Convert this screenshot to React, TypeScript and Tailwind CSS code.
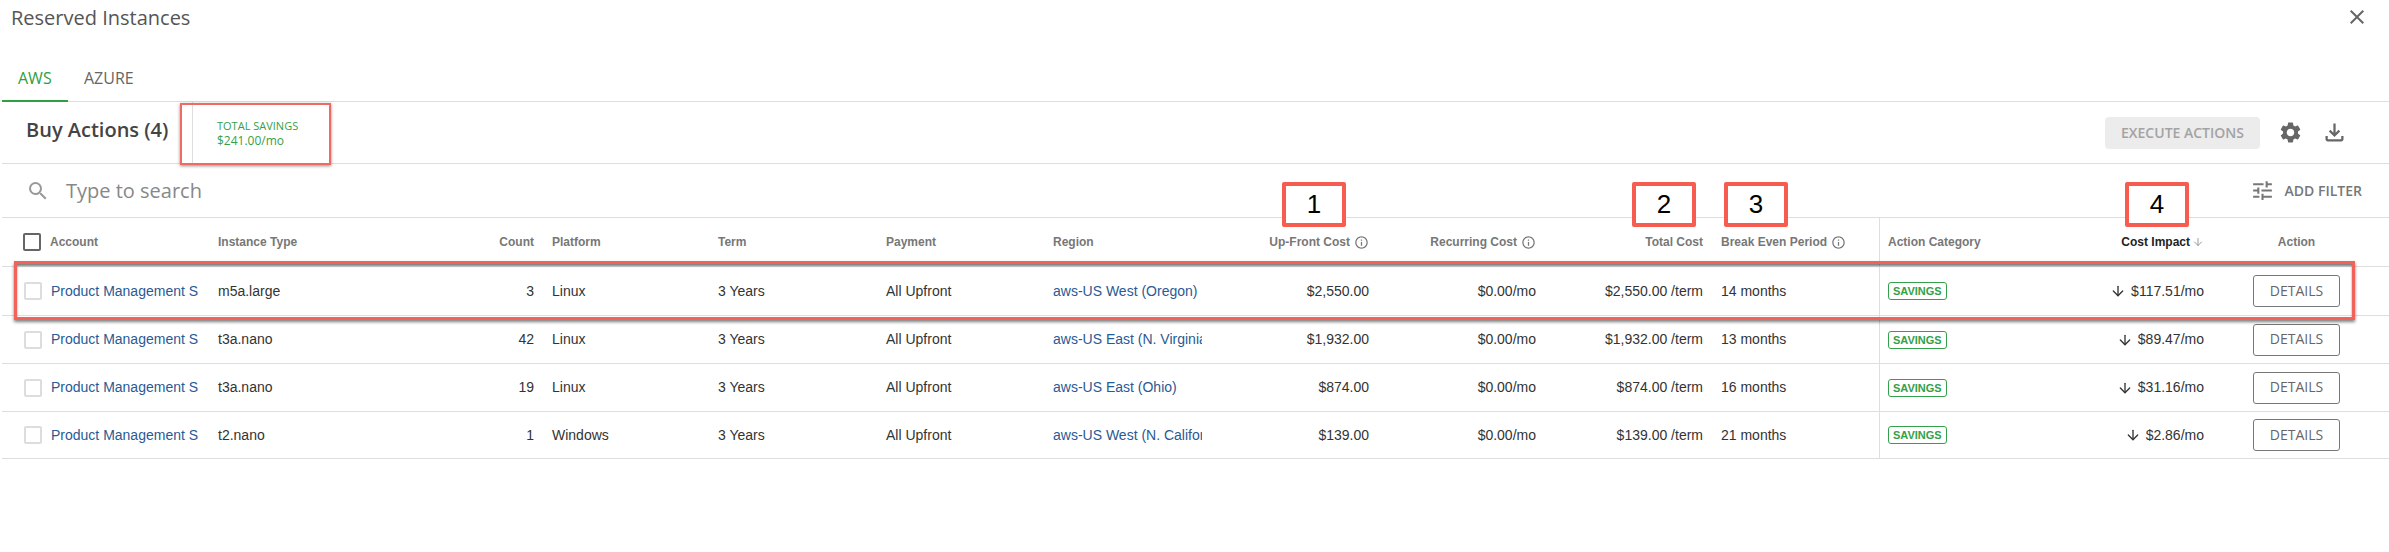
import { ArrowDown } from "lucide-react";
import { MdClose, MdInfoOutline, MdOutlineFileDownload, MdSearch, MdSettings, MdTune } from "react-icons/md";

const gridCols =
  "grid grid-cols-[177px_150px_148px_148px_150px_149px_149px_149px_149px_149px_140px_150px_157px_149px] gap-x-[18px] pl-[21px]";

const rows = [
  { count: 3, type: "m5a.large", platform: "Linux", region: "aws-US West (Oregon)", upfront: "$2,550.00", total: "$2,550.00 /term", breakEven: "14 months", impact: "$117.51/mo", height: "h-[49px]" },
  { count: 42, type: "t3a.nano", platform: "Linux", region: "aws-US East (N. Virginia)", upfront: "$1,932.00", total: "$1,932.00 /term", breakEven: "13 months", impact: "$89.47/mo", height: "h-[48px]" },
  { count: 19, type: "t3a.nano", platform: "Linux", region: "aws-US East (Ohio)", upfront: "$874.00", total: "$874.00 /term", breakEven: "16 months", impact: "$31.16/mo", height: "h-[48px]" },
  { count: 1, type: "t2.nano", platform: "Windows", region: "aws-US West (N. California)", upfront: "$139.00", total: "$139.00 /term", breakEven: "21 months", impact: "$2.86/mo", height: "h-[47px]" },
];

const Callout = ({ n, className }: { n: number; className: string }) => (
  <div className={`absolute top-[182px] h-[45px] w-[64px] border-4 border-[#f65c50] rounded-[2px] bg-white flex items-center justify-center text-[26px] text-black font-['Liberation_Sans',sans-serif] ${className}`}>
    {n}
  </div>
);

const App = () => {
  return (
    <div className="relative w-[2389px] h-[552px] overflow-hidden bg-white font-['Liberation_Sans',sans-serif]">
      <div className="ml-[2px]">
        {/* Title + tabs */}
        <div className="h-[102px] border-b border-[#dedede] font-['Open_Sans',sans-serif]">
          <div className="h-[64px] flex justify-between pl-[9px] pr-[20px] pt-[4px]">
            <h1 className="text-[20px] leading-[28px] text-[#555]">Reserved Instances</h1>
            <MdClose className="text-[#666] mt-[1px]" size={24} />
          </div>
          <div className="flex h-[37px] text-[16px] leading-[24px]">
            <div className="w-[66px] pl-[16px] pt-[2px] border-b-2 border-[#2ea043] text-[#2f9e44] h-[38px]">AWS</div>
            <div className="pl-[16px] pt-[2px] text-[#666]">AZURE</div>
          </div>
        </div>

        {/* Toolbar */}
        <div className="h-[62px] border-b border-[#dedede] flex items-center font-['Open_Sans',sans-serif]">
          <h2 className="ml-[24px] w-[166px] pb-[5px] text-[20px] font-semibold text-[#444]">Buy Actions (4)</h2>
          <div className="h-full border-l border-[#dedede] pl-[24px] pt-[2px] flex flex-col justify-center text-[#35a04a]">
            <span className="text-[11px] leading-[15px] font-medium">TOTAL SAVINGS</span>
            <span className="text-[12px] leading-[16px]">$241.00/mo</span>
          </div>
          <button className="ml-auto w-[155px] h-[32px] rounded-[4px] bg-[#ececec] text-[14px] font-semibold text-[#a3a3a3]">EXECUTE ACTIONS</button>
          <MdSettings className="ml-[18px] text-[#666]" size={25} />
          <MdOutlineFileDownload className="ml-[18px] mr-[41px] text-[#666]" size={27} />
        </div>

        {/* Search */}
        <div className="h-[54px] border-b border-[#dedede] flex items-center font-['Open_Sans',sans-serif]">
          <MdSearch className="ml-[24px] text-[#999]" size={24} />
          <span className="ml-[16px] text-[20px] text-[#888]">Type to search</span>
          <MdTune className="ml-auto text-[#777]" size={25} />
          <span className="ml-[10px] mr-[27px] text-[14px] font-semibold text-[#777]">ADD FILTER</span>
        </div>

        {/* Table */}
        <div className={`${gridCols} h-[49px] items-center border-b border-[#dedede] text-[12px] font-bold text-[#777]`}>
          <div className="flex items-center gap-[9px]">
            <span className="w-[18px] h-[18px] border-2 border-[#666] rounded-[2px]" />
            <span>Account</span>
          </div>
          <span>Instance Type</span>
          <span className="text-right">Count</span>
          <span>Platform</span>
          <span>Term</span>
          <span>Payment</span>
          <span>Region</span>
          <span className="flex items-center justify-end gap-1">Up-Front Cost <MdInfoOutline size={15} /></span>
          <span className="flex items-center justify-end gap-1">Recurring Cost <MdInfoOutline size={15} /></span>
          <span className="text-right">Total Cost</span>
          <span className="flex items-center gap-1">Break Even Period <MdInfoOutline size={15} /></span>
          <span className="self-stretch flex items-center border-l border-[#dedede] pl-[8px]">Action Category</span>
          <span className="flex items-center justify-end text-[#222]">Cost Impact <ArrowDown className="ml-[2px] text-[#999]" size={12} /></span>
          <span className="text-center">Action</span>
        </div>

        {rows.map((row) => (
          <div key={row.region} className={`${gridCols} ${row.height} items-center border-b border-[#dedede] text-[14px] text-[#333]`}>
            <div className="flex items-center gap-[9px] whitespace-nowrap">
              <span className="ml-px w-[18px] h-[18px] shrink-0 border-2 border-[#ddd] rounded-[2px]" />
              <span className="text-[#2a5a94]">Product Management S</span>
            </div>
            <span>{row.type}</span>
            <span className="text-right">{row.count}</span>
            <span>{row.platform}</span>
            <span>3 Years</span>
            <span>All Upfront</span>
            <span className="overflow-hidden whitespace-nowrap text-[#2a5a94]">{row.region}</span>
            <span className="text-right">{row.upfront}</span>
            <span className="text-right">$0.00/mo</span>
            <span className="text-right">{row.total}</span>
            <span>{row.breakEven}</span>
            <div className="self-stretch flex items-center border-l border-[#dedede] pl-[8px]">
              <span className="border border-[#35a04a] rounded-[3px] px-1 h-[18px] leading-[16px] text-[11px] font-bold text-[#35a04a]">SAVINGS</span>
            </div>
            <span className="flex items-center justify-end gap-[5px]"><ArrowDown size={16} />{row.impact}</span>
            <div className="flex justify-center">
              <button className="w-[87px] h-[32px] pb-[2px] border border-[#777] rounded-[3px] font-['Open_Sans',sans-serif] text-[14px] text-[#666]">DETAILS</button>
            </div>
          </div>
        ))}
      </div>

      {/* Red annotations drawn over the screenshot */}
      <div className="absolute left-[180px] top-[103px] w-[151px] h-[62px] border-2 border-[#ee6b63] shadow-[0_1px_3px_rgba(0,0,0,0.45)]" />
      <div className="absolute left-[14px] top-[261px] w-[2341px] h-[59px] border-[3px] border-[#f0625a] shadow-[0_2px_3px_rgba(0,0,0,0.5),inset_0_2px_2px_rgba(0,0,0,0.5)]" />
      <Callout n={1} className="left-[1282px]" />
      <Callout n={2} className="left-[1632px]" />
      <Callout n={3} className="left-[1724px]" />
      <Callout n={4} className="left-[2125px]" />
    </div>
  );
};

export default App;
